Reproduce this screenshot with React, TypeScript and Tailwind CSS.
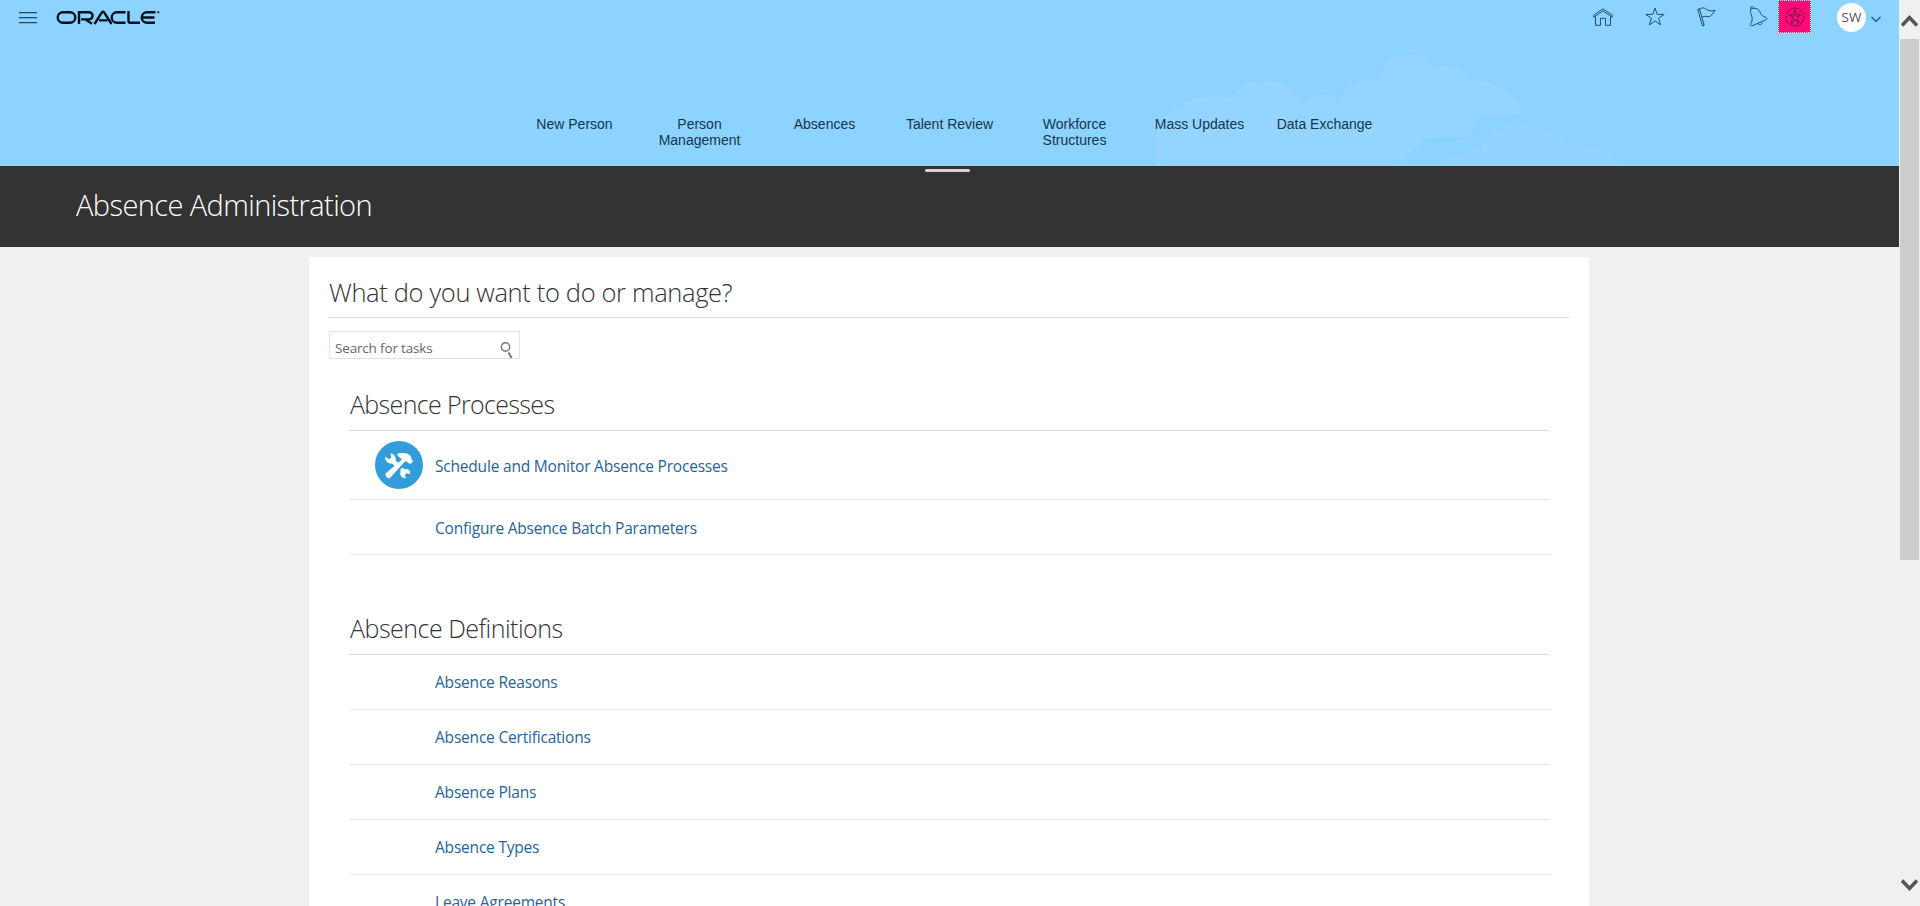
import React from "react";

const navItems = ["New Person", "Person Management", "Absences", "Talent Review", "Workforce Structures", "Mass Updates", "Data Exchange"];

const sections = [
  {
    title: "Absence Processes",
    tracking: "tracking-[-0.65px]",
    rows: [
      { label: "Schedule and Monitor Absence Processes", layout: "h-[69px] pt-[10px]", icon: true },
      { label: "Configure Absence Batch Parameters", layout: "h-[55px] pt-[3px]", icon: false },
    ],
  },
  {
    title: "Absence Definitions",
    tracking: "tracking-[-0.5px]",
    rows: [
      { label: "Absence Reasons", layout: "h-[55px] pt-[2px]", icon: false },
      { label: "Absence Certifications", layout: "h-[55px] pt-[2px]", icon: false },
      { label: "Absence Plans", layout: "h-[55px] pt-[2px]", icon: false },
      { label: "Absence Types", layout: "h-[55px] pt-[2px]", icon: false },
      { label: "Leave Agreements", layout: "h-[55px] pt-[2px]", icon: false },
    ],
  },
];

function MenuIcon() {
  return (
    <svg width="18" height="12" viewBox="0 0 18 12" stroke="#1d4a66" strokeWidth="1.2">
      <path d="M0 .6h18M0 5.600h18M0 10.600h18" />
    </svg>
  );
}

function OracleLogo() {
  return (
    <svg width="104" height="15" viewBox="0 0 104 15" fill="none" stroke="#04111d" strokeWidth="2.4">
      <path d="M7 2.2h7a5.3 5.3 0 0 1 0 10.6h-7a5.3 5.3 0 0 1 0-10.6z" />
      <path d="M23 14V2.2h10a3.6 3.6 0 0 1 0 7.2h-8M29.5 9.4l6.5 4.3" />
      <path d="M38.5 14l7.5-11.8q1-1.2 2 0L55.5 14M43 10.4h8.5" />
      <path d="M69.5 2.2h-8.5a5.3 5.3 0 0 0 0 10.6h8.5" />
      <path d="M72.5 1v10q0 1.8 1.8 1.8h9.700" />
      <path d="M99.5 2.2h-8.5a5.3 5.3 0 0 0 0 10.6h8M86 7.5h12.500" />
      <circle cx="102.300" cy="2.200" r="0.700" strokeWidth="1" />
    </svg>
  );
}

function HomeIcon() {
  return (
    <svg width="20" height="18" viewBox="0 0 20 18" fill="none" stroke="#234f6c" strokeWidth="1">
      <path d="M.7 7.2L10 .8l9.300 6.400v2L10 2.900.700 9.200zM2.500 8.500v8.800h5v-7h5v7h5V8.500" />
    </svg>
  );
}

function StarIcon() {
  return (
    <svg width="20" height="19" viewBox="0 0 20 19" fill="none" stroke="#234f6c" strokeWidth="1">
      <path d="M10 1l2.200 6.400h6.900l-5.500 4 2.100 6.500L10 13.900l-5.700 4 2.100-6.500-5.500-4h6.900z" />
    </svg>
  );
}

function FlagIcon() {
  return (
    <svg width="19" height="20" viewBox="0 0 19 20" fill="none" stroke="#234f6c" strokeWidth="1">
      <path d="M.7 2.300l1.700-.6 4.800 16.700-1.700.5zM2.800 2.200C6-.5 8 1.500 10.500 3c2.500 1.300 5 .8 7.800.2-2 1.500-3 5.300-5.600 6.300-2.700.8-4.800-1.200-7.500.5" />
    </svg>
  );
}

function BellIcon() {
  return (
    <svg width="19" height="21" viewBox="0 0 19 21" fill="none" stroke="#234f6c" strokeWidth="1">
      <path d="M2 3.300C4 2 8 1.500 10 4.500c1.500 2 1.500 3.500 3 5 1.500 1.300 4.500 1.300 4.800 2.800.2 1.300-1.500 1.800-3 2.300L4 19.500c-1.300.5-2.600.4-2.600-.8 0-1.800 1.800-2.500 1.800-5.500C3.200 9 .3 6 2 3.300z" />
      <path d="M2 3.300C1 2.500 1.500.7 3 .7c1.300 0 1.900.9 1.800 1.800M9.200 17.800c.8 1.700 4.200.8 3.900-1.400" />
    </svg>
  );
}

function AccessibilityIcon() {
  return (
    <svg width="20" height="20" viewBox="0 0 20 20" fill="none" stroke="#7b0a47" strokeWidth="1">
      <circle cx="10" cy="10" r="9" />
      <circle cx="10" cy="4.800" r="1.400" />
      <path d="M4.500 7.300l4 .7h3l4-.7.2 1.200-3.500 1.100.3 2 1.500 4.400-1.200.5-2.800-4.500-2.800 4.500-1.200-.5 1.500-4.400.3-2-3.500-1.100z" />
    </svg>
  );
}

function Clouds() {
  return (
    <svg className="absolute bottom-0 left-[1150px]" width="480" height="120" viewBox="1150 46 480 120">
      <path fill="#94d5ff" d="M1156 166v-26c0-14 6-22 17-29 9-9 22-14 35-14 8-2 17 0 24 0 4-9 16-16 32-16 21 0 32 7 36 20 1 3 3 2 5 1 7-7 21-10 35-3 0-11 16-21 41-20-3-13 8-25 26-25 14 0 22 5 26 15 17-5 33 0 41 11 28 2 47 17 47 34-12 3-25 3-41 2-4 6-3 13-8 18-6 6-28 2-46 5-9 6-16 16-27 27z" />
      <path fill="#92d4ff" d="M1438 166c6-10 24-16 42-15 3-15 19-26 43-26 21 0 38 9 44 22 22-3 44 4 51 19z" />
    </svg>
  );
}

function ToolsIcon() {
  return (
    <svg width="48" height="48" viewBox="0 0 48 48">
      <circle cx="24" cy="24" r="24" fill="#319ddb" />
      <g fill="#fff">
        <path d="M10.500 32.500L27 18.500l-4-3.500c-1-1-.8-2.500.500-2.700C29 11.500 34 12 36 15.500l.8 3.500 1.500.8-2.800 3.200-3-1.500-1.200-1.500-2.300 1.500L15 37c-1.500 1.500-5-1.800-4.500-4.500z" />
        <path d="M10 15.500l4 2.800 2.500-1.800-1.200-4c4 .5 6 3.500 5.300 7l3 2.700-3.400 3-3.400-2.700c-3.500.8-7-2.500-6.800-7z" />
        <path d="M25.500 28.200l1.800-1.600 2.200 1.700c4-.9 6.200 1.700 5.600 4.700l-3.600-.7-1.700 1.700 1.200 3.300c-4 0-6.500-2.600-5.600-6z" />
      </g>
    </svg>
  );
}

export default function App() {
  return (
    <div className="flex h-[906px] w-[1920px] overflow-hidden bg-[#f0f0f0] font-['Open_Sans','Noto_Sans',sans-serif]">
      <div className="flex w-[1899px] shrink-0 flex-col">
        <header className="relative h-[166px] shrink-0 bg-[#8cd3ff]">
          <Clouds />
          <div className="relative flex h-[34px] items-start">
            <div className="pt-[12px] pl-[19px]"><MenuIcon /></div>
            <div className="pt-[10px] pl-[19px]"><OracleLogo /></div>
            <div className="ml-auto flex">
              <div className="w-[52px] pt-[8px]"><HomeIcon /></div>
              <div className="w-[52px] pt-[7px]"><StarIcon /></div>
              <div className="w-[52px] pt-[7px]"><FlagIcon /></div>
              <div className="w-[29px] pt-[6px]"><BellIcon /></div>
              <div className="flex h-[33px] w-[33px] items-center justify-center border border-dotted border-white bg-[#ff0a78]"><AccessibilityIcon /></div>
              <div className="mt-[3px] ml-[26px] flex h-[29px] w-[29px] items-center justify-center rounded-full bg-white text-[13.500px] text-[#555]">SW</div>
              <svg className="mt-[16px] mr-[18px] ml-[5px]" width="10" height="7" viewBox="0 0 10 7" fill="none" stroke="#234f6c" strokeWidth="1.2"><path d="M.5 1L5 5.500 9.500 1" /></svg>
            </div>
          </div>
          <nav className="relative mt-[82px] flex justify-center font-['Liberation_Sans',Arial,sans-serif] text-[14px] leading-[16px] text-[#17354a]">
            {navItems.map((item) => (
              <div key={item} className="w-[125px] px-[12px] text-center">{item}</div>
            ))}
          </nav>
        </header>
        <div className="flex h-[81px] w-[1899px] shrink-0 flex-col bg-[#333]">
          <div className="mt-[3px] mr-[4px] h-[3px] w-[45px] self-center rounded-full bg-[#d5cfe0]" />
          <h1 className="mt-[13px] ml-[76px] text-[29px] leading-[40px] font-light tracking-[-0.6px] text-white">Absence Administration</h1>
        </div>
        <main className="mt-[10px] ml-[309px] w-[1280px] flex-1 bg-white px-[20px] pt-[14px]">
          <h2 className="h-[47px] border-b border-[#d6dadd] pt-px text-[25.500px] leading-[40px] font-light tracking-[-0.350px] text-[#333]">What do you want to do or manage?</h2>
          <div className="mt-[13px] flex h-[28px] w-[191px] justify-between border border-[#dfe1e3] pr-[6px] pl-[5px]">
            <span className="pt-[6px] text-[13.500px] leading-[20px] tracking-[-0.170px] text-[#666]">Search for tasks</span>
            <svg className="mt-[10px]" width="13" height="17" viewBox="0 0 13 17" fill="none" stroke="#777"><circle cx="5.500" cy="5" r="4.200" strokeWidth="1.400" /><path d="M8.500 10.500l3 5.500" strokeWidth="2" /></svg>
          </div>
          {sections.map((section) => (
            <section key={section.title} className="mx-[20px] mb-[28px] pt-[24px]">
              <h3 className={`h-[48px] border-b border-[#d6dadd] pt-px pl-px text-[25px] leading-[40px] font-light text-[#333] ${section.tracking}`}>{section.title}</h3>
              {section.rows.map((row) => (
                <div key={row.label} className={`flex items-start border-b border-[#e8eaec] ${row.layout}`}>
                  <div className="w-[86px] pl-[26px]">{row.icon && <ToolsIcon />}</div>
                  <a className="pt-[13px] text-[15.500px] leading-[24px] tracking-[-0.200px] text-[#1f649b]">{row.label}</a>
                </div>
              ))}
            </section>
          ))}
        </main>
      </div>
      <div className="flex w-[21px] flex-col items-center bg-[#f0f0f0]">
        <svg className="mt-[14px]" width="17" height="14" viewBox="0 0 17 14" fill="none" stroke="#555" strokeWidth="3.500"><path d="M1 11.500l7.500-8 7.500 8" /></svg>
        <div className="mt-[11px] h-[521px] w-[19px] bg-[#cdcdcd]" />
        <svg className="mt-auto mb-[14px]" width="17" height="14" viewBox="0 0 17 14" fill="none" stroke="#555" strokeWidth="3.500"><path d="M1 2.500l7.500 8 7.500-8" /></svg>
      </div>
    </div>
  );
}
